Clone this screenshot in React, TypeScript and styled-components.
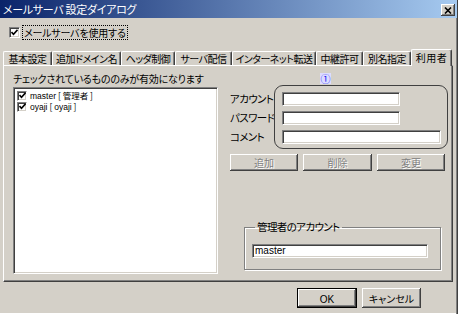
import React from 'react'
import styled, { createGlobalStyle } from 'styled-components'

const FACE = '#d4d0c8'
const UI_FONT = `"Noto Sans CJK JP", "Liberation Sans", sans-serif`

const GlobalStyle = createGlobalStyle`
  html, body {
    margin: 0;
    padding: 0;
    background: ${FACE};
  }
  body {
    font-family: ${UI_FONT};
    font-size: 10px;
    font-feature-settings: "palt";
    color: #000;
  }
  * {
    box-sizing: border-box;
  }
`

const raised = `
  box-shadow: inset -1px -1px #404040, inset 1px 1px #ffffff,
    inset -2px -2px #808080;
`

const sunken = `
  border: 1px solid;
  border-color: #808080 #ffffff #ffffff #808080;
  box-shadow: inset 1px 1px #404040, inset -1px -1px ${FACE};
`

const Window = styled.div`
  width: 458px;
  height: 314px;
  display: flex;
  flex-direction: column;
  background: ${FACE};
  border-right: 1px solid #404040;
  box-shadow: inset -1px 0 #808080, inset 0 -1px #ffffff;
  overflow: hidden;
`

const TitleBar = styled.div`
  height: 18px;
  flex: none;
  display: flex;
  align-items: center;
  justify-content: space-between;
  padding: 0 2px 0 3px;
  background: linear-gradient(to right, #0a246a, #a6caf0);
  color: #fff;
  font-size: 11px;
  letter-spacing: -0.3px;
`

const CloseButton = styled.div`
  width: 14px;
  height: 12px;
  margin-top: 2px;
  display: flex;
  align-items: center;
  justify-content: center;
  background: ${FACE};
  ${raised}
`

const EnableRow = styled.label`
  margin: 7px 0 0 9px;
  height: 14px;
  display: flex;
  align-items: center;
  gap: 3px;
`

const Box = styled.span<{ size: number }>`
  width: ${({ size }) => size}px;
  height: ${({ size }) => size}px;
  flex: none;
  display: inline-flex;
  align-items: center;
  justify-content: center;
  background: #fff;
  ${sunken}
`

const FocusText = styled.span`
  outline: 1px dotted #000;
  padding: 0 1px;
  line-height: 13px;
  letter-spacing: -0.2px;
`

const TabStrip = styled.div`
  margin: 10px 0 0 3px;
  height: 16px;
  display: flex;
  align-items: flex-end;
`

const Tab = styled.div<{ w: number; active?: boolean }>`
  width: ${({ w }) => w}px;
  height: ${({ active }) => (active ? 17 : 14)}px;
  margin-bottom: ${({ active }) => (active ? -1 : 0)}px;
  position: relative;
  z-index: ${({ active }) => (active ? 1 : 0)};
  display: flex;
  align-items: center;
  justify-content: center;
  background: ${FACE};
  border-top: 1px solid #fff;
  border-left: 1px solid #fff;
  border-right: 1px solid #404040;
  border-radius: 2px 2px 0 0;
  box-shadow: inset -1px 0 #808080;
  white-space: nowrap;
  line-height: 12px;
  font-size: 10px;
  letter-spacing: ${({ active }) => (active ? 0.5 : -0.5)}px;
  overflow: hidden;
`

const Panel = styled.div`
  margin-left: 3px;
  width: 450px;
  height: 217px;
  flex: none;
  display: flex;
  padding: 6px 0 7px 9px;
  border: 1px solid;
  border-color: #fff #404040 #404040 #fff;
  box-shadow: inset -1px -1px #808080;
`

const LeftColumn = styled.div`
  width: 205px;
  display: flex;
  flex-direction: column;
`

const Caption = styled.div`
  height: 14px;
  line-height: 14px;
  white-space: nowrap;
  letter-spacing: -0.2px;
`

const ListBox = styled.div`
  flex: 1;
  margin-top: 1px;
  padding: 2px 3px;
  background: #fff;
  ${sunken}
`

const ListItem = styled.div`
  height: 11px;
  display: flex;
  align-items: center;
  gap: 3px;
  white-space: nowrap;
  font-size: 8.5px;
  line-height: 11px;
`

const Latin = styled.span<{ size: number }>`
  font-family: "Liberation Sans", Arial, sans-serif;
  font-size: ${({ size }) => size}px;
`

const RightColumn = styled.div`
  margin-left: 12px;
  width: 219px;
  display: flex;
  flex-direction: column;
`

const MarkerRow = styled.div`
  height: 13px;
  padding-left: 90px;
  display: flex;
  align-items: center;
`

const Marker = styled.span`
  width: 11px;
  height: 11px;
  display: inline-flex;
  align-items: center;
  justify-content: center;
  background: #dcdcff;
  color: #1010f0;
  font-size: 10px;
  line-height: 10px;
`

const FormArea = styled.div`
  display: flex;
`

const LabelColumn = styled.div`
  width: 44px;
  padding-top: 7px;
  display: flex;
  flex-direction: column;
  gap: 5px;
`

const FieldLabel = styled.div`
  height: 14px;
  line-height: 14px;
  font-size: 10.5px;
  letter-spacing: -0.6px;
  white-space: nowrap;
`

const Frame = styled.div`
  width: 174px;
  height: 64px;
  padding: 6px 6px 0 7px;
  display: flex;
  flex-direction: column;
  gap: 5px;
  border: 1px solid #404040;
  border-radius: 9px;
`

const Field = styled.input<{ w: number }>`
  width: ${({ w }) => w}px;
  height: 14px;
  margin: 0;
  padding: 0 2px;
  background: #fff;
  font-family: "Liberation Sans", Arial, sans-serif;
  font-size: 10px;
  color: #000;
  outline: none;
  ${sunken}
`

const ButtonRow = styled.div`
  margin-top: 5px;
  display: flex;
  gap: 5px;
`

const Button = styled.button<{ w: number; primary?: boolean }>`
  width: ${({ w }) => w}px;
  height: 17px;
  margin: 0;
  padding: 0;
  background: ${FACE};
  border: ${({ primary }) => (primary ? '1px solid #000' : 'none')};
  ${raised}
  font-family: ${UI_FONT};
  font-feature-settings: "palt";
  font-size: 10px;
  color: #000;
  &:disabled {
    color: #808080;
    text-shadow: 1px 1px #fff;
  }
`

const FooterButton = styled(Button)`
  height: 20px;
`

const GroupBox = styled.fieldset`
  margin: 49px 0 0 14px;
  width: 197px;
  padding: 8px 7px 11px 7px;
  border: 1px solid #808080;
  box-shadow: 1px 1px #fff, inset 1px 1px #fff;
  min-inline-size: 0;
`

const Legend = styled.legend`
  margin-left: 3px;
  padding: 0 2px;
  font-size: 10.5px;
  line-height: 14px;
  letter-spacing: -0.6px;
`

const Footer = styled.div`
  margin-top: 6px;
  padding-right: 36px;
  display: flex;
  justify-content: flex-end;
  gap: 5px;
`

const Check = () => (
  <svg width="7" height="7" viewBox="0 0 7 7">
    <path d="M0.5 3 L2.5 5.2 L6.5 0.8" fill="none" stroke="#000" strokeWidth="1.6" />
  </svg>
)

const CloseGlyph = () => (
  <svg width="8" height="7" viewBox="0 0 8 7">
    <path d="M1 0.5 L7 6.5 M7 0.5 L1 6.5" stroke="#000" strokeWidth="1.6" />
  </svg>
)

const tabs = [
  { label: '基本設定', w: 49 },
  { label: '追加ドメイン名', w: 69 },
  { label: 'ヘッダ制御', w: 54 },
  { label: 'サーバ配信', w: 57 },
  { label: 'インターネット転送', w: 84 },
  { label: '中継許可', w: 47 },
  { label: '別名指定', w: 48 },
  { label: '利用者', w: 41, active: true },
]

const users = [
  { name: 'master', note: '管理者', latinNote: false },
  { name: 'oyaji', note: 'oyaji', latinNote: true },
]

export default function App() {
  return (
    <>
      <GlobalStyle />
      <Window>
        <TitleBar>
          <span>メールサーバ 設定ダイアログ</span>
          <CloseButton>
            <CloseGlyph />
          </CloseButton>
        </TitleBar>

        <EnableRow>
          <Box size={11}>
            <Check />
          </Box>
          <FocusText>メールサーバを使用する</FocusText>
        </EnableRow>

        <TabStrip>
          {tabs.map((t) => (
            <Tab key={t.label} w={t.w} active={t.active}>
              {t.label}
            </Tab>
          ))}
        </TabStrip>

        <Panel>
          <LeftColumn>
            <Caption>チェックされているもののみが有効になります</Caption>
            <ListBox>
              {users.map((u) => (
                <ListItem key={u.name}>
                  <Box size={10}>
                    <Check />
                  </Box>
                  <span>
                    <Latin size={8.5}>{u.name}</Latin> [{' '}
                    {u.latinNote ? <Latin size={8.5}>{u.note}</Latin> : u.note} ]
                  </span>
                </ListItem>
              ))}
            </ListBox>
          </LeftColumn>

          <RightColumn>
            <MarkerRow>
              <Marker>①</Marker>
            </MarkerRow>
            <FormArea>
              <LabelColumn>
                <FieldLabel>アカウント</FieldLabel>
                <FieldLabel>パスワード</FieldLabel>
                <FieldLabel>コメント</FieldLabel>
              </LabelColumn>
              <Frame>
                <Field w={118} readOnly value="" />
                <Field w={118} readOnly value="" />
                <Field w={159} readOnly value="" />
              </Frame>
            </FormArea>
            <ButtonRow>
              <Button w={68} disabled>追加</Button>
              <Button w={69} disabled>削除</Button>
              <Button w={68} disabled>変更</Button>
            </ButtonRow>
            <GroupBox>
              <Legend>管理者のアカウント</Legend>
              <Field w={176} readOnly value="master" />
            </GroupBox>
          </RightColumn>
        </Panel>

        <Footer>
          <FooterButton w={60} primary>
            <Latin size={10}>OK</Latin>
          </FooterButton>
          <FooterButton w={59}>キャンセル</FooterButton>
        </Footer>
      </Window>
    </>
  )
}
